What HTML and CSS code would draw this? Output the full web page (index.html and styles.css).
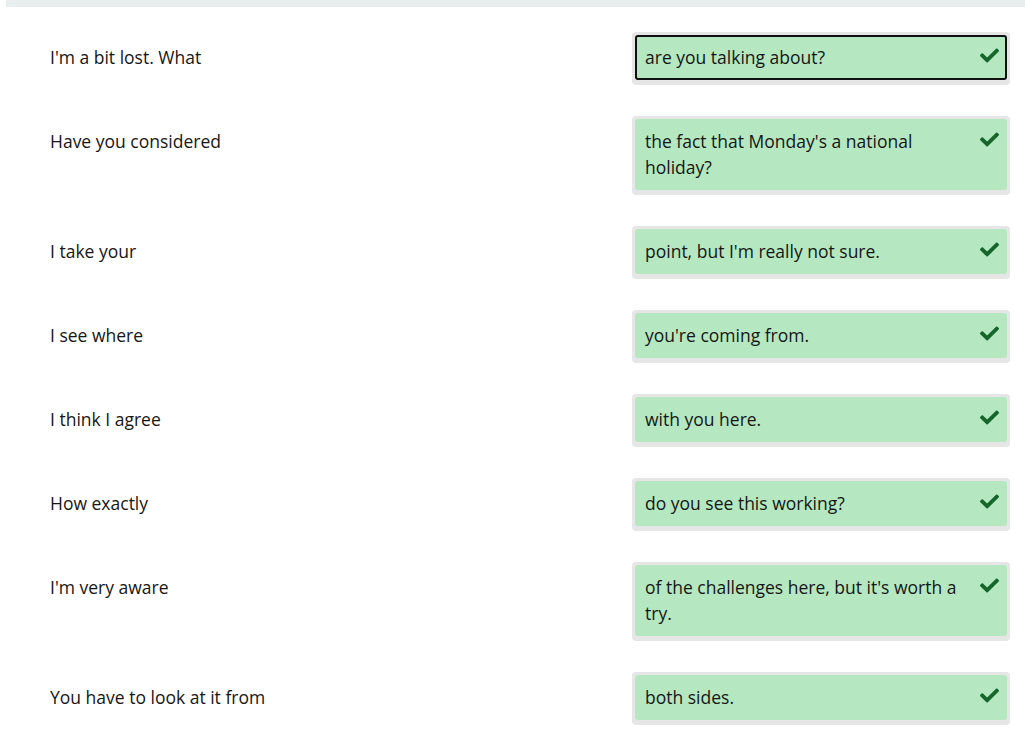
FILE: index.html
```html
<!DOCTYPE html>
<html lang="en">
<head>
<meta charset="utf-8">
<title>Match sentences</title>
<link rel="stylesheet" href="styles.css">
</head>
<body>
<div class="topbar"></div>
<div class="list">
  <div class="row">
    <div class="prompt">I'm a bit lost. What</div>
    <div class="answer-wrap"><div class="answer focused"><span class="answer-text">are you talking about?</span><svg class="check" viewBox="0 0 512 512"><path d="M173.9 439.4l-166.4-166.4c-10-10-10-26.2 0-36.2l36.2-36.2c10-10 26.2-10 36.2 0L192 312.7 432.1 72.6c10-10 26.2-10 36.2 0l36.2 36.2c10 10 10 26.2 0 36.2l-294.4 294.4c-10 10-26.2 10-36.2 0z"/></svg></div></div>
  </div>
  <div class="row">
    <div class="prompt">Have you considered</div>
    <div class="answer-wrap"><div class="answer"><span class="answer-text">the fact that Monday's a national holiday?</span><svg class="check" viewBox="0 0 512 512"><path d="M173.9 439.4l-166.4-166.4c-10-10-10-26.2 0-36.2l36.2-36.2c10-10 26.2-10 36.2 0L192 312.7 432.1 72.6c10-10 26.2-10 36.2 0l36.2 36.2c10 10 10 26.2 0 36.2l-294.4 294.4c-10 10-26.2 10-36.2 0z"/></svg></div></div>
  </div>
  <div class="row">
    <div class="prompt">I take your</div>
    <div class="answer-wrap"><div class="answer"><span class="answer-text">point, but I'm really not sure.</span><svg class="check" viewBox="0 0 512 512"><path d="M173.9 439.4l-166.4-166.4c-10-10-10-26.2 0-36.2l36.2-36.2c10-10 26.2-10 36.2 0L192 312.7 432.1 72.6c10-10 26.2-10 36.2 0l36.2 36.2c10 10 10 26.2 0 36.2l-294.4 294.4c-10 10-26.2 10-36.2 0z"/></svg></div></div>
  </div>
  <div class="row">
    <div class="prompt">I see where</div>
    <div class="answer-wrap"><div class="answer"><span class="answer-text">you're coming from.</span><svg class="check" viewBox="0 0 512 512"><path d="M173.9 439.4l-166.4-166.4c-10-10-10-26.2 0-36.2l36.2-36.2c10-10 26.2-10 36.2 0L192 312.7 432.1 72.6c10-10 26.2-10 36.2 0l36.2 36.2c10 10 10 26.2 0 36.2l-294.4 294.4c-10 10-26.2 10-36.2 0z"/></svg></div></div>
  </div>
  <div class="row">
    <div class="prompt">I think I agree</div>
    <div class="answer-wrap"><div class="answer"><span class="answer-text">with you here.</span><svg class="check" viewBox="0 0 512 512"><path d="M173.9 439.4l-166.4-166.4c-10-10-10-26.2 0-36.2l36.2-36.2c10-10 26.2-10 36.2 0L192 312.7 432.1 72.6c10-10 26.2-10 36.2 0l36.2 36.2c10 10 10 26.2 0 36.2l-294.4 294.4c-10 10-26.2 10-36.2 0z"/></svg></div></div>
  </div>
  <div class="row">
    <div class="prompt">How exactly</div>
    <div class="answer-wrap"><div class="answer"><span class="answer-text">do you see this working?</span><svg class="check" viewBox="0 0 512 512"><path d="M173.9 439.4l-166.4-166.4c-10-10-10-26.2 0-36.2l36.2-36.2c10-10 26.2-10 36.2 0L192 312.7 432.1 72.6c10-10 26.2-10 36.2 0l36.2 36.2c10 10 10 26.2 0 36.2l-294.4 294.4c-10 10-26.2 10-36.2 0z"/></svg></div></div>
  </div>
  <div class="row">
    <div class="prompt">I'm very aware</div>
    <div class="answer-wrap"><div class="answer"><span class="answer-text">of the challenges here, but it's worth a try.</span><svg class="check" viewBox="0 0 512 512"><path d="M173.9 439.4l-166.4-166.4c-10-10-10-26.2 0-36.2l36.2-36.2c10-10 26.2-10 36.2 0L192 312.7 432.1 72.6c10-10 26.2-10 36.2 0l36.2 36.2c10 10 10 26.2 0 36.2l-294.4 294.4c-10 10-26.2 10-36.2 0z"/></svg></div></div>
  </div>
  <div class="row">
    <div class="prompt">You have to look at it from</div>
    <div class="answer-wrap"><div class="answer"><span class="answer-text">both sides.</span><svg class="check" viewBox="0 0 512 512"><path d="M173.9 439.4l-166.4-166.4c-10-10-10-26.2 0-36.2l36.2-36.2c10-10 26.2-10 36.2 0L192 312.7 432.1 72.6c10-10 26.2-10 36.2 0l36.2 36.2c10 10 10 26.2 0 36.2l-294.4 294.4c-10 10-26.2 10-36.2 0z"/></svg></div></div>
  </div>
</div>
</body>
</html>
```

FILE: styles.css
```css
html, body {
  margin: 0;
  padding: 0;
  background: #ffffff;
}

body {
  font-family: "Open Sans", "Noto Sans", sans-serif;
  font-size: 17.5px;
  line-height: 26px;
  color: #161616;
}

.topbar {
  height: 7px;
  margin-left: 6px;
  background: #e8eded;
}

.list {
  display: flex;
  flex-direction: column;
  gap: 31px;
  padding: 25px 15px 0 50px;
}

.row {
  display: flex;
  align-items: flex-start;
}

.prompt {
  flex: 1;
  padding-top: 12px;
}

.answer-wrap {
  width: 372px;
  padding: 3px 3px 5px 3px;
  background: #e6e6e6;
  border-radius: 4px;
}

.answer {
  display: flex;
  align-items: flex-start;
  gap: 12px;
  padding: 7px 6px 8px 8px;
  border: 2px solid transparent;
  border-radius: 3px;
  background: #b5e8c0;
}

.answer.focused {
  border-color: #111111;
}

.answer-text {
  flex: 1;
}

.check {
  width: 19px;
  height: 19px;
  margin-top: 2px;
  fill: #16652a;
  flex: none;
}
```
